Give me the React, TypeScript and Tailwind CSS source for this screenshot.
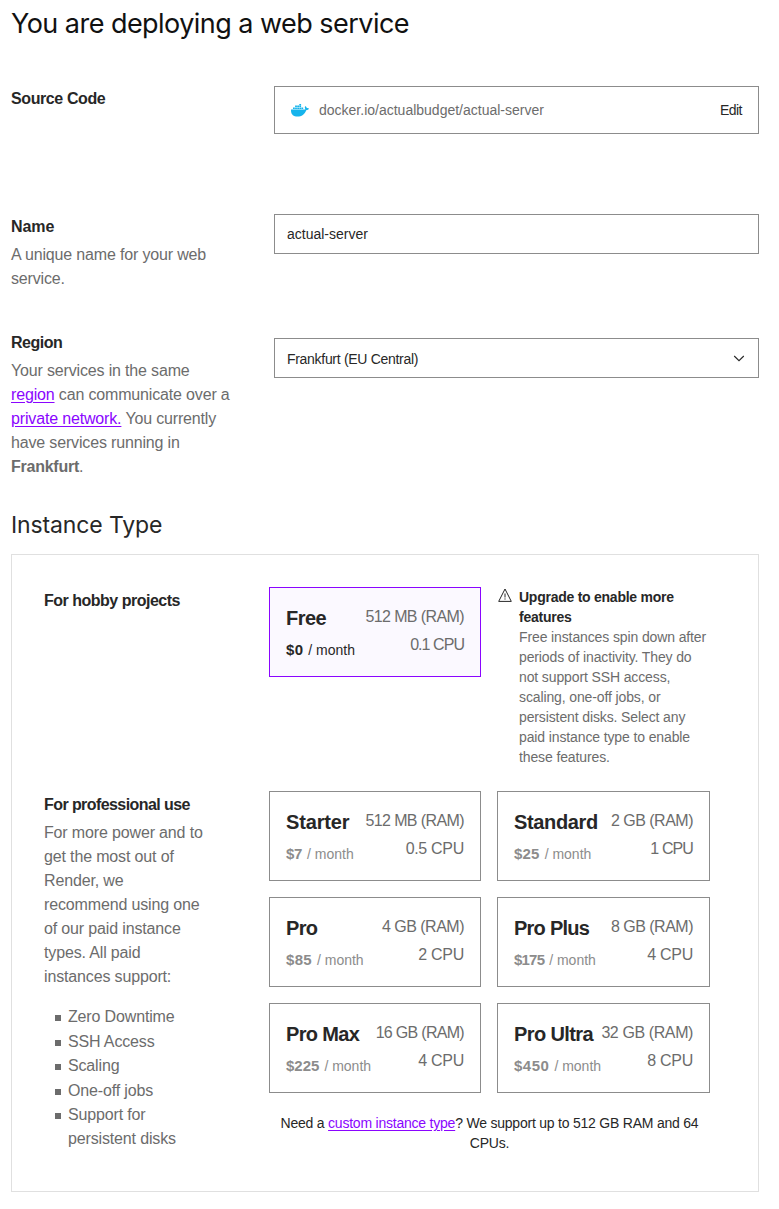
import React from "react";

type Plan = {
  name: string;
  nameClass: string;
  price: string;
  priceClass: string;
  ram: string;
  ramClass: string;
  cpu: string;
  cpuClass: string;
  selected?: boolean;
};

const freePlan: Plan = {
  name: "Free", nameClass: "tracking-[-0.5px]", price: "$0", priceClass: "tracking-[0.3px]",
  ram: "512 MB (RAM)", ramClass: "tracking-[-0.6px]",
  cpu: "0.1 CPU", cpuClass: "tracking-[-0.95px]", selected: true,
};

const paidPlans: Plan[] = [
  { name: "Starter", nameClass: "tracking-[-0.15px]", price: "$7", priceClass: "tracking-[-0.3px]", ram: "512 MB (RAM)", ramClass: "tracking-[-0.6px]", cpu: "0.5 CPU", cpuClass: "tracking-[-0.3px]" },
  { name: "Standard", nameClass: "tracking-[-0.35px]", price: "$25", priceClass: "tracking-[0.2px]", ram: "2 GB (RAM)", ramClass: "tracking-[-0.5px]", cpu: "1 CPU", cpuClass: "tracking-[-0.9px]" },
  { name: "Pro", nameClass: "tracking-[-0.7px]", price: "$85", priceClass: "tracking-[0.3px]", ram: "4 GB (RAM)", ramClass: "tracking-[-0.5px]", cpu: "2 CPU", cpuClass: "tracking-[-0.3px]" },
  { name: "Pro Plus", nameClass: "tracking-[-0.75px]", price: "$175", priceClass: "tracking-[-0.8px]", ram: "8 GB (RAM)", ramClass: "tracking-[-0.5px]", cpu: "4 CPU", cpuClass: "tracking-[-0.3px]" },
  { name: "Pro Max", nameClass: "tracking-[-0.65px]", price: "$225", priceClass: "tracking-[0px]", ram: "16 GB (RAM)", ramClass: "tracking-[-0.7px]", cpu: "4 CPU", cpuClass: "tracking-[-0.3px]" },
  { name: "Pro Ultra", nameClass: "tracking-[-0.6px]", price: "$450", priceClass: "tracking-[0.5px]", ram: "32 GB (RAM)", ramClass: "tracking-[-0.4px]", cpu: "8 CPU", cpuClass: "tracking-[-0.3px]" },
];

function PlanCard({ plan }: { plan: Plan }) {
  return (
    <button
      type="button"
      className={`flex h-[90px] justify-between border px-4 pt-[15px] text-left whitespace-nowrap ${
        plan.selected ? "border-[#8a05ff] bg-[#fbf9ff]" : "border-[#8c8c8c] bg-white"
      }`}
    >
      <span className="flex flex-col">
        <span className={`pt-px text-[20px] leading-7 font-bold text-[#272727] ${plan.nameClass}`}>{plan.name}</span>
        <span className={`mt-[6px] flex items-baseline text-sm leading-6 ${plan.selected ? "text-[#272727]" : "text-[#8c8c8c]"}`}>
          <span className={`mr-[5px] text-[15px] font-bold ${plan.priceClass}`}>{plan.price}</span>/ month
        </span>
      </span>
      <span className="flex flex-col items-end text-base leading-7 text-[#6c6c6c]">
        <span className={plan.ramClass}>{plan.ram}</span>
        <span className={plan.cpuClass}>{plan.cpu}</span>
      </span>
    </button>
  );
}

function Label({ children, className = "tracking-[-0.5px]" }: { children: React.ReactNode; className?: string }) {
  return <h3 className={`text-base leading-6 font-bold text-[#272727] ${className}`}>{children}</h3>;
}

function DockerIcon() {
  return (
    <svg className="h-[13px] w-[18px] shrink-0" viewBox="0 0 18 13" fill="#16b4ec">
      <path d="M0 5.5h13.2c.5 0 .9-.1 1.2-.3-.8-1-.8-2.2-.1-3.1.9.5 1.4 1.200 1.500 2 .8-.2 1.600 0 2.200.4-.4 1.100-1.400 1.700-2.800 1.700C13.700 10.300 10.700 12.500 6.500 12.500 2.200 12.500-.3 10 0 5.500Z" />
      <path d="M2 3.400h1.800v1.700H2zM4.100 3.400h1.800v1.700H4.100zM6.200 3.400H8v1.700H6.200zM8.300 3.400h1.800v1.700H8.300zM10.400 3.400h1.800v1.700h-1.800zM4.100 1.500h1.800v1.600H4.100zM6.200 1.500H8v1.600H6.200zM8.300 1.500h1.800v1.600H8.300zM8.300 0h1.800v1.200H8.300z" />
    </svg>
  );
}

function WarningIcon() {
  return (
    <svg className="mt-px h-[14px] w-[14px] shrink-0" viewBox="0 0 14 14" fill="none" stroke="#272727">
      <path d="M7 1 13.3 13.400H.7Z" />
      <path d="M7 5.500V9.500M7 10.400V11.600" />
    </svg>
  );
}

export default function App() {
  return (
    <main
      className="h-[1209px] w-[779px] overflow-hidden bg-white pr-5 pl-[11px] text-[#272727]"
      style={{ fontFamily: '"Liberation Sans", Arial, sans-serif' }}
    >
      <h1 className="h-[86px] pt-[6px] font-[Inter,sans-serif] text-[27px] leading-9 tracking-[-0.54px] whitespace-nowrap text-[#111]">
        You are deploying a web service
      </h1>

      <section className="grid h-32 grid-cols-[263px_485px] items-start">
        <div className="pt-px"><Label className="tracking-[-0.4px]">Source Code</Label></div>
        <div className="flex h-12 items-center border border-[#8c8c8c] px-4">
          <DockerIcon />
          <span className="ml-[10px] text-sm text-[#6c6c6c]">docker.io/actualbudget/actual-server</span>
          <button type="button" className="ml-auto text-sm tracking-[-0.5px]">Edit</button>
        </div>
      </section>

      <section className="grid h-[116px] grid-cols-[263px_485px] items-start">
        <div className="pt-px">
          <Label className="tracking-[-0.1px]">Name</Label>
          <p className="mt-1 w-[225px] text-base leading-6 tracking-[-0.16px] text-[#6c6c6c]">A unique name for your web service.</p>
        </div>
        <input className="h-10 border border-[#8c8c8c] px-3 text-sm outline-none" defaultValue="actual-server" />
      </section>

      <section className="grid h-[178px] grid-cols-[263px_485px] items-start">
        <div className="pt-px">
          <Label>Region</Label>
          <p className="mt-1 w-[225px] text-base leading-6 tracking-[-0.16px] text-[#6c6c6c]">
            Your services in the same <a className="text-[#8a05ff] underline underline-offset-2">region</a> can communicate over a{" "}
            <a className="text-[#8a05ff] underline underline-offset-2">private network.</a> You currently have services running in{" "}
            <b className="tracking-[-0.25px]">Frankfurt</b>.
          </p>
        </div>
        <button type="button" className="mt-2 flex h-10 items-center justify-between border border-[#8c8c8c] pt-px pr-[13px] pl-3 text-sm">
          <span className="tracking-[-0.3px]">Frankfurt (EU Central)</span>
          <svg className="h-3 w-3" viewBox="0 0 12 12" fill="none" stroke="#272727" strokeWidth="1.1">
            <path d="m1.2 3 4.8 4.7 4.8-4.7" />
          </svg>
        </button>
      </section>

      <h2 className="h-[46px] font-[Inter,sans-serif] text-[23px] leading-[34px] tracking-[-0.12px] text-[#272727]">Instance Type</h2>

      <section className="h-[638px] border border-[#e0e0e0] pt-8 pl-8">
        <div className="grid h-[204px] grid-cols-[225px_212px_213px] items-start">
          <div className="pt-[2px]"><Label>For hobby projects</Label></div>
          <PlanCard plan={freePlan} />
          <div className="ml-[17px] flex gap-[7px]">
            <WarningIcon />
            <div className="w-[195px] shrink-0 text-sm leading-5 text-[#6c6c6c]">
              <p className="font-bold tracking-[-0.25px] text-[#272727]">Upgrade to enable more<br />features</p>
              <p className="tracking-[-0.12px]">
                Free instances spin down after<br />periods of inactivity. They do<br />not support SSH access,<br />
                scaling, one-off jobs, or<br />persistent disks. Select any<br />paid instance type to enable<br />these features.
              </p>
            </div>
          </div>
        </div>

        <div className="grid grid-cols-[225px_441px] items-start">
          <div className="pt-[2px] text-base leading-6 tracking-[-0.15px] text-[#6c6c6c]">
            <Label className="tracking-[-0.58px]">For professional use</Label>
            <p className="mt-1 w-[162px]">
              For more power and to get the most out of Render, we recommend using one of our paid instance types. All paid instances support:
            </p>
            <ul className="mt-4 flex w-[162px] flex-col gap-[0.5px] pl-[11px]">
              {["Zero Downtime", "SSH Access", "Scaling", "One-off jobs", "Support for persistent disks"].map((item) => (
                <li key={item} className="flex items-start gap-[7px]">
                  <span className="mt-[10px] size-[6px] shrink-0 bg-[#6c6c6c]" />
                  <span>{item}</span>
                </li>
              ))}
            </ul>
          </div>
          <div>
            <div className="grid grid-cols-[212px_213px] gap-4">
              {paidPlans.map((plan) => <PlanCard key={plan.name} plan={plan} />)}
            </div>
            <p className="mt-5 text-center text-sm leading-5 tracking-[-0.22px]">
              Need a <a className="text-[#8a05ff] underline underline-offset-2">custom instance type</a>? We support up to 512 GB RAM and 64<br />CPUs.
            </p>
          </div>
        </div>
      </section>
    </main>
  );
}
